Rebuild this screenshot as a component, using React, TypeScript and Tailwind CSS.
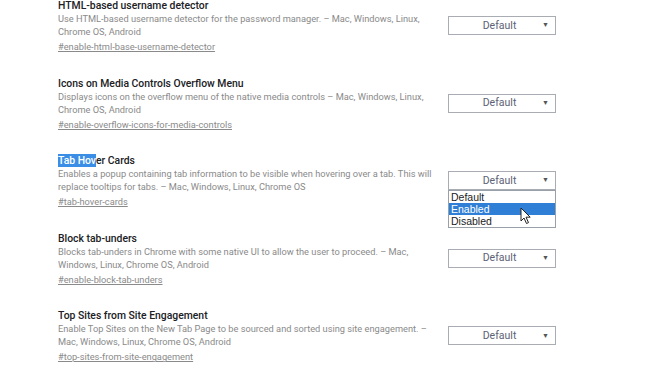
import React from "react";

type Flag = {
  title: string;
  desc: string;
  link: string;
  open?: boolean;
  highlight?: number;
};

const flags: Flag[] = [
  {
    title: "HTML-based username detector",
    desc: "Use HTML-based username detector for the password manager. – Mac, Windows, Linux, Chrome OS, Android",
    link: "#enable-html-base-username-detector",
  },
  {
    title: "Icons on Media Controls Overflow Menu",
    desc: "Displays icons on the overflow menu of the native media controls – Mac, Windows, Linux, Chrome OS, Android",
    link: "#enable-overflow-icons-for-media-controls",
  },
  {
    title: "Tab Hover Cards",
    desc: "Enables a popup containing tab information to be visible when hovering over a tab. This will replace tooltips for tabs. – Mac, Windows, Linux, Chrome OS",
    link: "#tab-hover-cards",
    open: true,
    highlight: 7,
  },
  {
    title: "Block tab-unders",
    desc: "Blocks tab-unders in Chrome with some native UI to allow the user to proceed. – Mac, Windows, Linux, Chrome OS, Android",
    link: "#enable-block-tab-unders",
  },
  {
    title: "Top Sites from Site Engagement",
    desc: "Enable Top Sites on the New Tab Page to be sourced and sorted using site engagement. – Mac, Windows, Linux, Chrome OS, Android",
    link: "#top-sites-from-site-engagement",
  },
];

const Cursor = () => (
  <svg
    width="12"
    height="18"
    viewBox="0 0 12 18"
    className="absolute left-[71px] top-[16px]"
  >
    <path
      d="M1 1 L1 14 L4 11 L6.5 16.5 L8.5 15.6 L6 10.2 L10.2 10.2 Z"
      fill="#fff"
      stroke="#222"
      strokeWidth="1"
      strokeLinejoin="round"
    />
  </svg>
);

const Select = ({ open }: { open?: boolean }) => (
  <div className="relative mt-[16px] w-[108px] shrink-0">
    <div className="flex h-[19px] items-center border border-[#a9adb3] bg-white text-[10.5px] text-[#5b6275]">
      <span className="flex-1 pl-[8px] text-center">Default</span>
      <span className="pr-[6px] text-[7px] text-[#555]">▼</span>
    </div>
    {open && (
      <div className="absolute left-0 top-full w-full border border-[#9aa0a8] bg-white font-['Liberation_Sans',Arial,sans-serif] text-[10.5px] leading-[12px] text-[#222]">
        <div className="pl-[2px]">Default</div>
        <div className="bg-[#2f7fd6] pl-[2px] text-white">Enabled</div>
        <div className="pl-[2px]">Disabled</div>
        <Cursor />
      </div>
    )}
  </div>
);

export default function App() {
  return (
    <div className="h-[365px] w-[650px] overflow-hidden bg-white font-['Roboto',sans-serif]">
      <div className="ml-[58px] flex w-[498px] flex-col gap-[24.6px]">
        {flags.map((f) => (
          <div key={f.link} className="flex items-start justify-between">
            <div className="w-[382px]">
              <h3 className="text-[10.4px] font-medium leading-[12px] text-[#202124]">
                {f.highlight ? (
                  <>
                    <span className="bg-[#3a8ee6] text-white">
                      {f.title.slice(0, f.highlight)}
                    </span>
                    {f.title.slice(f.highlight)}
                  </>
                ) : (
                  f.title
                )}
              </h3>
              <p className="text-[9.25px] leading-[13px] text-[#8a8a8a]">
                {f.desc}
              </p>
              <a className="mt-[2px] block text-[9.25px] leading-[13px] text-[#8a8a8a] underline">
                {f.link}
              </a>
            </div>
            <Select open={f.open} />
          </div>
        ))}
      </div>
    </div>
  );
}
